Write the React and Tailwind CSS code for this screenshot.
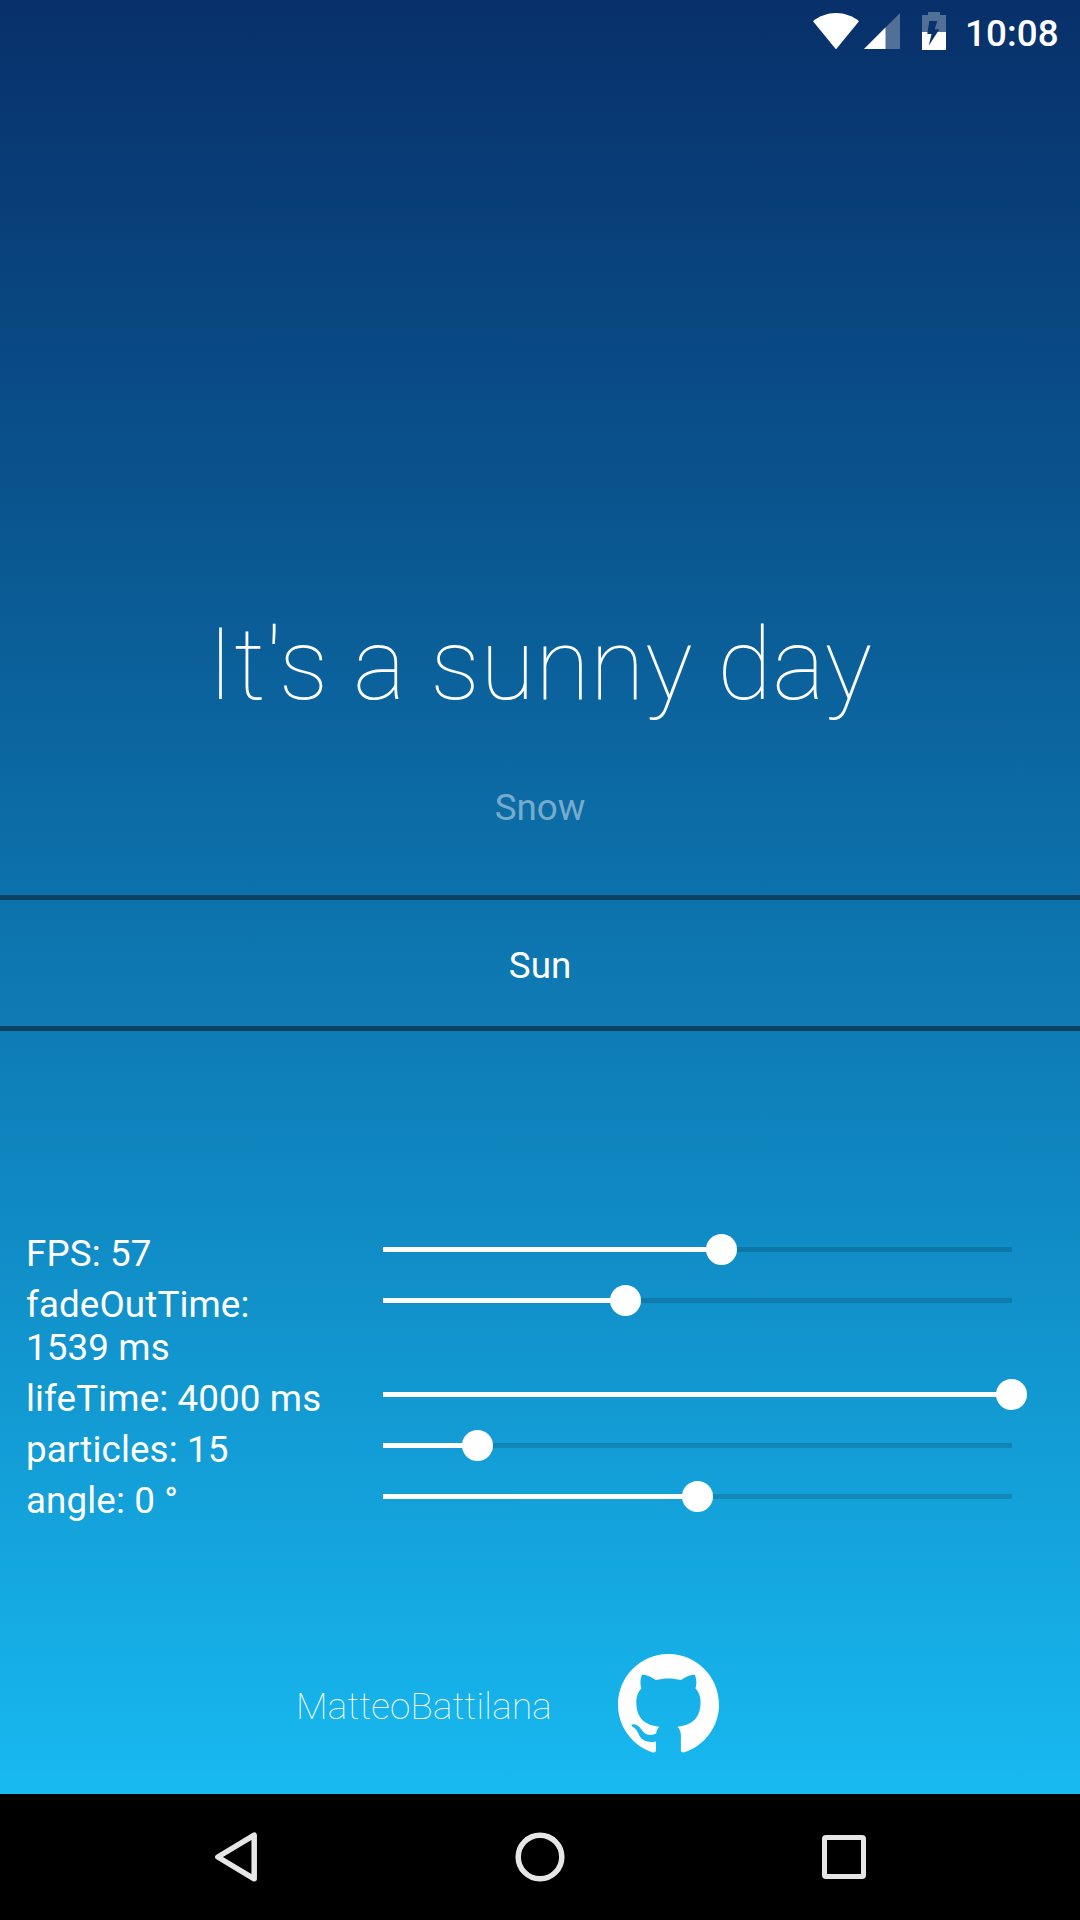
const SLIDERS = [
  { label: "FPS: 57", fill: 338 },
  { label: "fadeOutTime: 1539 ms", fill: 242 },
  { label: "lifeTime: 4000 ms", fill: 628 },
  { label: "particles: 15", fill: 94 },
  { label: "angle: 0 °", fill: 314 },
];

function StatusBar() {
  return (
    <header className="flex h-[63px] items-start pl-[813px] text-white">
      <svg className="mt-[13px] h-9 w-[46px]" viewBox="0 0 46 36" fill="currentColor">
        <path d="M23 36.4 0 8.2C6.500 3 14.500 0 23 0s16.500 3 23 8.200z" />
      </svg>
      <svg className="mt-[13px] ml-[5px] h-9 w-9" viewBox="0 0 36 36" fill="currentColor">
        <path d="M36 0v36H0z" opacity=".3" />
        <path d="M21.500 14.500V36H0z" />
      </svg>
      <svg className="mt-3 ml-[22px] h-[38px] w-6" viewBox="0 0 24 38" fill="currentColor">
        <path opacity=".3" d="M6 0h12v3h6v17h-8.400l1.700-2.700h-4.600L15.300 9h-8L5.600 20H0V3h6z" />
        <path d="M0 20h5.600l-.3 2h4.200L6.700 33.700 15.600 20H24v18H0z" />
      </svg>
      <span className="mt-3 ml-[19px] text-[36.750px] leading-[43px] font-medium tracking-[0.1px]">10:08</span>
    </header>
  );
}

function WeatherPicker() {
  return (
    <section className="flex flex-col text-center text-[36.750px] leading-[43px]">
      <div className="h-[109px] text-white/45">Snow</div>
      <div className="h-[136px] border-y-[5px] border-[#0a4161] pt-11">Sun</div>
    </section>
  );
}

function SliderRow({ label, fill }) {
  return (
    <div className="flex pb-2">
      <div className="w-[357px] shrink-0 pr-8 pl-[26px]">{label}</div>
      <div className="mt-[15px] ml-[26px] h-[5px] w-[629px] bg-black/15">
        <div className="flex h-full items-center justify-end bg-white" style={{ width: fill }}>
          <div className="-mr-4 h-[31px] w-[31px] shrink-0 rounded-full bg-white" />
        </div>
      </div>
    </div>
  );
}

function NavigationBar() {
  return (
    <nav className="flex h-[126px] items-center bg-black pl-[215px] text-[#e6e6e6]">
      <svg className="h-[50px] w-[42px]" viewBox="0 0 42 50" fill="none" stroke="currentColor" strokeWidth="5.500" strokeLinejoin="round">
        <path d="M39.200 3.200v43.600L2.800 25z" />
      </svg>
      <svg className="ml-[258px] h-[50px] w-[50px]" viewBox="0 0 50 50" fill="none" stroke="currentColor" strokeWidth="5.500">
        <circle cx="25" cy="25" r="21.800" />
      </svg>
      <div className="ml-[257px] h-11 w-11 rounded border-[5px] border-[#e6e6e6]" />
    </nav>
  );
}

export default function App() {
  return (
    <div className="flex h-[1920px] w-[1080px] flex-col overflow-hidden bg-black font-[Roboto,sans-serif] text-white">
      <main className="flex h-[1794px] flex-col bg-linear-to-b from-[#08306a] to-[#18b9f1]">
        <StatusBar />
        <h1 className="mt-[542px] h-[181px] text-center text-[99.750px] leading-[120px] font-thin tracking-[0.35px] whitespace-nowrap">
          It's a sunny day
        </h1>
        <WeatherPicker />
        <section className="mt-[201px] text-[36.750px] leading-[43px] tracking-[0.12px]">
          {SLIDERS.map((s) => (
            <SliderRow key={s.label} {...s} />
          ))}
        </section>
        <footer className="mt-[124px] flex items-start pl-[296px]">
          <span className="mt-[31px] w-[322px] text-[36.750px] leading-[43px] font-thin tracking-[0.28px]">MatteoBattilana</span>
          <svg className="h-[101px] w-[101px]" viewBox="0 0.3 24 24" fill="currentColor">
            <path d="M12 .297c-6.630 0-12 5.373-12 12 0 5.303 3.438 9.800 8.205 11.385.6.113.820-.258.820-.577 0-.285-.010-1.040-.015-2.040-3.338.724-4.042-1.610-4.042-1.610C4.422 18.070 3.633 17.700 3.633 17.700c-1.087-.744.084-.729.084-.729 1.205.084 1.838 1.236 1.838 1.236 1.070 1.835 2.809 1.305 3.495.998.108-.776.417-1.305.760-1.605-2.665-.300-5.466-1.332-5.466-5.930 0-1.310.465-2.380 1.235-3.220-.135-.303-.540-1.523.105-3.176 0 0 1.005-.322 3.300 1.230.960-.267 1.980-.399 3-.405 1.020.006 2.040.138 3 .405 2.280-1.552 3.285-1.230 3.285-1.230.645 1.653.240 2.873.120 3.176.765.840 1.230 1.910 1.230 3.220 0 4.610-2.805 5.625-5.475 5.920.420.360.810 1.096.810 2.220 0 1.606-.015 2.896-.015 3.286 0 .315.210.690.825.570C20.565 22.092 24 17.592 24 12.297c0-6.627-5.373-12-12-12" />
          </svg>
        </footer>
      </main>
      <NavigationBar />
    </div>
  );
}
